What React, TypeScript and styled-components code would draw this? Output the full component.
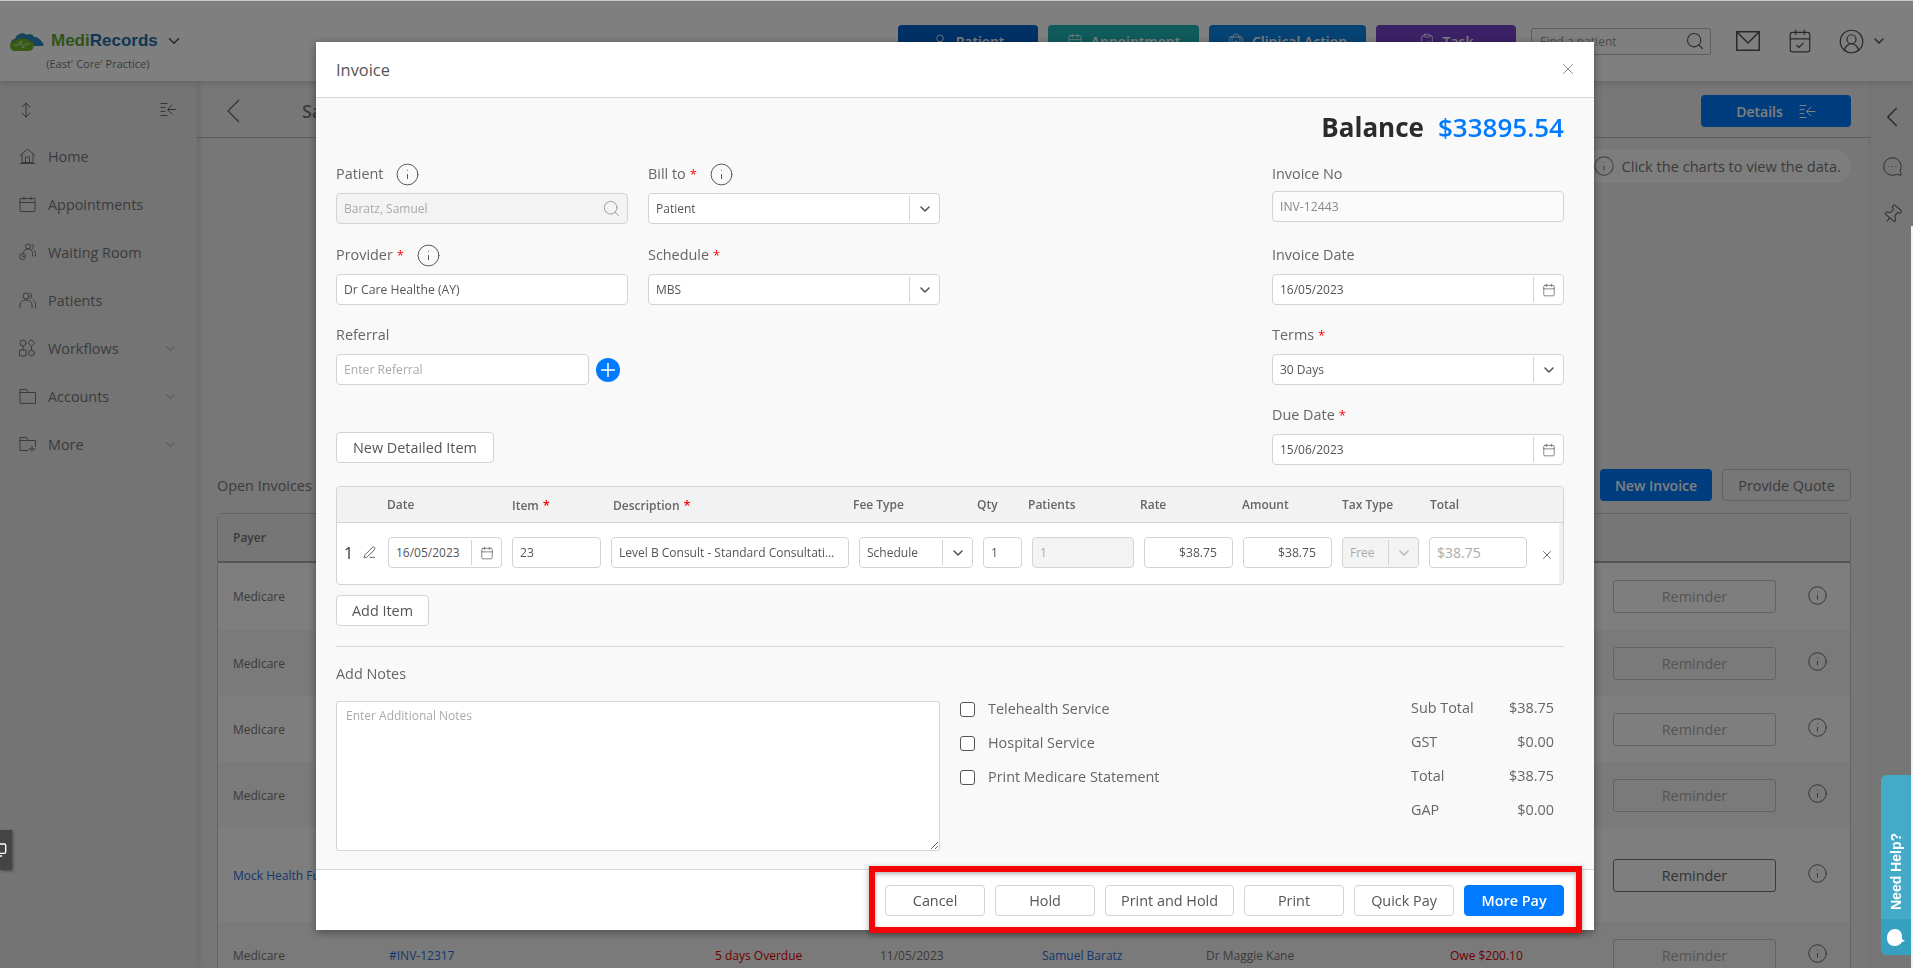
import React from 'react';
import styled, { createGlobalStyle } from 'styled-components';
import {
  Calendar,
  CalendarCheck,
  ChevronDown,
  ChevronLeft,
  CircleUserRound,
  ClipboardCheck,
  BriefcaseMedical,
  Info,
  MessageCircleMore,
  Monitor,
  PenLine,
  Pin,
  Search,
  UserRound,
  X
} from 'lucide-react';

const GlobalStyle = createGlobalStyle`
  html, body {
    margin: 0;
    height: 100%;
    overflow: hidden;
    font-family: 'Open Sans', 'Noto Sans', sans-serif;
    color: #666;
  }
  * { box-sizing: border-box; }
`;

/* background page */

const Page = styled.div`
  width: 1913px;
  height: 968px;
  display: flex;
  flex-direction: column;
  overflow: hidden;
  background: #eee;
`;

const TopBar = styled.header`
  height: 81px;
  flex: none;
  display: flex;
  align-items: center;
  padding: 1px 26px 0 8px;
  background: #fff;
  box-shadow: 0 2px 6px rgba(0, 0, 0, 0.15);
  position: relative;
  z-index: 2;
`;

const LogoBlock = styled.div`
  align-self: flex-start;
  margin-top: 29px;
  display: flex;
  flex-direction: column;
  align-items: center;
  margin-right: auto;
`;

const LogoRow = styled.div`
  height: 22px;
  display: flex;
  align-items: center;
  gap: 7px;
`;

const LogoText = styled.span`
  font-family: 'Liberation Sans', Arial, sans-serif;
  font-size: 17px;
  font-weight: 700;
  color: #1b6ea8;
  b {
    color: #62a82c;
    font-weight: 700;
  }
`;

const LogoSub = styled.div`
  margin: 5px 0 0 5px;
  font-size: 11px;
  line-height: 14px;
  color: #777;
`;

const ActionButton = styled.div<{ $bg: string; $w: number }>`
  width: ${p => p.$w}px;
  height: 32px;
  margin-right: 10px;
  border-radius: 4px;
  background: ${p => p.$bg};
  color: #fff;
  font-size: 14px;
  font-weight: 600;
  display: flex;
  align-items: center;
  justify-content: center;
  gap: 8px;
`;

const FindBox = styled.div`
  width: 180px;
  height: 27px;
  margin-left: 5px;
  padding: 0 5px 0 8px;
  display: flex;
  align-items: center;
  justify-content: space-between;
  border: 1px solid #bbb;
  border-radius: 2px;
  font-size: 12px;
  color: #999;
`;

const TopIcon = styled.span<{ $left: number }>`
  margin-left: ${p => p.$left}px;
  display: flex;
  color: #555;
`;

const Body = styled.div`
  flex: 1;
  display: flex;
  min-height: 0;
`;

const Sidebar = styled.nav`
  width: 197px;
  flex: none;
  background: #e9e9e9;
  box-shadow: 2px 0 6px rgba(0, 0, 0, 0.12);
  position: relative;
  z-index: 1;
`;

const SideTools = styled.div`
  height: 51px;
  padding: 6px 20px 0 21px;
  display: flex;
  align-items: center;
  justify-content: space-between;
  color: #666;
`;

const NavItem = styled.div`
  height: 48px;
  padding: 0 19px;
  display: flex;
  align-items: center;
  gap: 12px;
  font-size: 14.4px;
  font-weight: 500;
  color: #777;
`;

const NavLabel = styled.span`
  flex: 1;
`;

const Main = styled.main`
  flex: 1;
  min-width: 0;
  background: #eee;
`;

const MainHeader = styled.div`
  height: 57px;
  padding: 4px 20px 0 29px;
  display: flex;
  align-items: center;
  border-bottom: 1px solid #bdbdbd;
`;

const PageTitle = styled.h1`
  flex: 1;
  margin: 0 0 0 62px;
  font-size: 18px;
  font-weight: 600;
  color: #777;
`;

const DetailsButton = styled.div`
  width: 150px;
  height: 32px;
  border-radius: 4px;
  background: #007bff;
  color: #fff;
  font-size: 14px;
  font-weight: 600;
  display: flex;
  align-items: center;
  justify-content: center;
  gap: 16px;
`;

const Content = styled.div`
  padding: 11px 20px 0;
`;

const TipRow = styled.div`
  display: flex;
  justify-content: flex-end;
  margin-bottom: 286px;
`;

const TipPill = styled.div`
  height: 34px;
  padding: 0 10px 0 8px;
  border-radius: 17px;
  background: #fafafa;
  display: flex;
  align-items: center;
  gap: 7px;
  font-size: 14.6px;
  color: #777;
`;

const InvoiceBar = styled.div`
  height: 32px;
  display: flex;
  align-items: center;
  justify-content: flex-end;
  gap: 10px;
  margin-bottom: 12px;
  font-size: 14.4px;
`;

const InvoiceTitle = styled.span`
  margin-right: auto;
  color: #777;
`;

const NewInvoice = styled.div`
  width: 112px;
  height: 32px;
  border-radius: 4px;
  background: #007bff;
  color: #fff;
  font-size: 14px;
  font-weight: 600;
  display: flex;
  align-items: center;
  justify-content: center;
`;

const ProvideQuote = styled.div`
  width: 129px;
  height: 32px;
  border-radius: 4px;
  border: 1px solid #c4c4c4;
  color: #777;
  display: flex;
  align-items: center;
  justify-content: center;
`;

const InvoiceTable = styled.div`
  border: 1px solid #c8c8c8;
  border-radius: 4px;
`;

const gridColumns = '156px 326px 165px 162px 164px 244px 163px 163px 1fr';

const InvoiceHead = styled.div`
  height: 49px;
  padding-left: 15px;
  display: grid;
  grid-template-columns: ${gridColumns};
  align-items: center;
  border-bottom: 2px solid #aaa;
  background: #ececec;
  font-size: 12px;
  font-weight: 600;
  color: #777;
`;

const InvoiceRow = styled.div<{ $h: number; $odd: boolean }>`
  height: ${p => p.$h}px;
  padding-left: 15px;
  display: grid;
  grid-template-columns: ${gridColumns};
  align-items: center;
  background: ${p => (p.$odd ? '#fdfdfd' : '#f4f4f4')};
  font-size: 12px;
  color: #777;
`;

const Link = styled.span`
  color: #2a6fd6;
  white-space: nowrap;
`;

const Overdue = styled.span`
  color: #e00000;
  white-space: nowrap;
`;

const Reminder = styled.div<{ $active: boolean }>`
  height: 33px;
  border-radius: 3px;
  border: 1px solid ${p => (p.$active ? '#777' : '#c4c4c4')};
  color: ${p => (p.$active ? '#666' : '#aaa')};
  font-size: 14.4px;
  font-weight: 500;
  display: flex;
  align-items: center;
  justify-content: center;
`;

const RowInfo = styled.div`
  padding: 0 0 3px 31px;
  display: flex;
  color: #666;
`;

const Rail = styled.aside`
  width: 42px;
  flex: none;
  padding: 24px 0 0;
  display: flex;
  flex-direction: column;
  align-items: center;
  gap: 27px;
  background: #ececec;
  color: #555;
  box-shadow: -1px 0 3px rgba(0, 0, 0, 0.08);
`;

const RailChevron = styled(ChevronLeft)`
  margin: -5px 0;
`;

const RailChat = styled(MessageCircleMore)`
  transform: scaleX(-1);
`;

const RailPin = styled(Pin)`
  transform: rotate(40deg);
`;

/* fixed layers */

const Dim = styled.div`
  position: fixed;
  inset: 0;
  z-index: 10;
  background: rgba(0, 0, 0, 0.5);
`;

const TopEdge = styled.div`
  position: fixed;
  left: 0;
  top: 0;
  width: 100%;
  height: 1px;
  z-index: 30;
  background: #c9c9c9;
`;

const RightEdge = styled.div`
  position: fixed;
  right: 0;
  top: 226px;
  bottom: 0;
  width: 2px;
  z-index: 30;
  background: #efefef;
`;

const Float = styled.div`
  position: fixed;
  left: 0;
  top: 830px;
  width: 12px;
  height: 40px;
  z-index: 20;
  overflow: hidden;
  background: #444;
  box-shadow: 1px 1px 3px rgba(0, 0, 0, 0.4);
  display: flex;
  align-items: center;
  justify-content: flex-end;
  padding-right: 5px;
  color: #fff;
  svg {
    flex: none;
  }
`;

const HelpTab = styled.div`
  position: fixed;
  right: 2px;
  top: 775px;
  width: 30px;
  height: 180px;
  z-index: 20;
  border-radius: 6px 0 0 6px;
  overflow: hidden;
  background: #43aac8;
  display: flex;
  flex-direction: column;
`;

const HelpText = styled.div`
  flex: 1;
  display: flex;
  justify-content: center;
  align-items: flex-start;
  padding-top: 58px;
`;

const HelpLabel = styled.span`
  writing-mode: vertical-rl;
  transform: rotate(180deg);
  font-family: 'Liberation Sans', Arial, sans-serif;
  font-size: 14px;
  font-weight: 700;
  color: #fff;
`;

const HelpIcon = styled.div`
  height: 36px;
  background: #36a0bf;
  display: flex;
  align-items: center;
  justify-content: center;
`;

/* invoice modal */

const Modal = styled.section`
  position: fixed;
  left: 316px;
  top: 42px;
  width: 1278px;
  height: 888px;
  z-index: 15;
  display: flex;
  flex-direction: column;
  background: #f9f9f9;
  border-radius: 2px;
  box-shadow: 0 2px 8px rgba(0, 0, 0, 0.4);
`;

const ModalHeader = styled.div`
  height: 56px;
  flex: none;
  padding: 0 17px 1px 20px;
  display: flex;
  align-items: center;
  justify-content: space-between;
  background: #fff;
  border-bottom: 1px solid #d5d5d5;
  color: #666;
`;

const ModalTitle = styled.h2`
  margin: 0;
  font-size: 16.4px;
  font-weight: 500;
  color: #555;
`;

const ModalBody = styled.div`
  flex: 1;
  padding: 0 30px 0 20px;
`;

const BalanceRow = styled.div`
  height: 58px;
  margin-bottom: 8px;
  display: flex;
  align-items: center;
  justify-content: flex-end;
  gap: 14px;
  font-size: 26px;
  font-weight: 700;
  color: #2b2b2b;
`;

const BalanceValue = styled.span`
  color: #007bff;
  font-weight: 600;
`;

const FormTop = styled.div`
  display: flex;
  justify-content: space-between;
  margin-bottom: 1px;
`;

const FormLeft = styled.div`
  width: 604px;
`;

const FieldGrid = styled.div`
  display: grid;
  grid-template-columns: 292px 292px;
  column-gap: 20px;
`;

const Field = styled.div<{ $first?: boolean }>`
  margin-bottom: ${p => (p.$first ? 21 : 20)}px;
`;

const RightField = styled.div<{ $first?: boolean }>`
  margin-bottom: ${p => (p.$first ? 23 : 20)}px;
`;

const FormRight = styled.div`
  width: 292px;
`;

const Label = styled.div<{ $gap?: number }>`
  height: 20px;
  margin-bottom: ${p => p.$gap ?? 9}px;
  display: flex;
  align-items: center;
  font-size: 14.4px;
  font-weight: 500;
  line-height: 20px;
  color: #666;
`;

const Star = styled.span`
  margin-left: 4px;
  font-size: 13px;
  color: #f00;
`;

const LabelInfo = styled.span`
  margin-left: 12px;
  display: flex;
  color: #555;
`;

const Input = styled.input<{ $align?: string; $muted?: boolean; $large?: boolean; $ghost?: boolean }>`
  display: block;
  width: 100%;
  height: 31px;
  padding: 0 7px;
  border: 1px solid #d3d3d3;
  border-radius: 4px;
  outline: none;
  background: ${p => (p.$muted ? '#fbfbfb' : '#fff')};
  font-family: inherit;
  font-size: ${p => (p.$large ? 14 : 12.2)}px;
  color: ${p => (p.$muted ? '#888' : p.$ghost ? '#aaa' : '#555')};
  text-align: ${p => p.$align ?? 'left'};
  &::placeholder {
    color: #aaa;
    opacity: 1;
  }
  &:disabled {
    background: #f3f3f3;
    color: #aaa;
  }
`;

const RateInput = styled(Input)`
  padding-right: 15px;
`;

const SearchWrap = styled.div`
  height: 31px;
  padding: 0 6px 0 7px;
  display: flex;
  align-items: center;
  justify-content: space-between;
  border: 1px solid #d3d3d3;
  border-radius: 4px;
  background: #f3f3f3;
  font-size: 12px;
  color: #aaa;
`;

const ReferralRow = styled.div`
  display: flex;
  align-items: center;
  gap: 7px;
`;

const ReferralInput = styled(Input)`
  width: 253px;
`;

const AddCircle = styled.span`
  width: 24px;
  height: 24px;
  border-radius: 50%;
  background: #007bff;
  display: flex;
  align-items: center;
  justify-content: center;
`;

const ComboBox = styled.div<{ $disabled?: boolean }>`
  height: 31px;
  display: flex;
  align-items: center;
  border: 1px solid #d3d3d3;
  border-radius: 4px;
  background: ${p => (p.$disabled ? '#f3f3f3' : '#fff')};
  font-size: 12px;
  color: ${p => (p.$disabled ? '#aaa' : '#555')};
`;

const ComboText = styled.span`
  flex: 1;
  min-width: 0;
  padding: 0 7px;
`;

const ComboEnd = styled.span<{ $disabled?: boolean }>`
  width: 30px;
  height: 25px;
  flex: none;
  display: flex;
  align-items: center;
  justify-content: center;
  border-left: 1px solid #d3d3d3;
  color: ${p => (p.$disabled ? '#bbb' : '#555')};
`;

const Button = styled.button<{ $primary?: boolean }>`
  height: 31px;
  min-width: 77px;
  padding: 0 15px;
  border: 1px solid ${p => (p.$primary ? '#007bff' : '#d3d3d3')};
  border-radius: 4px;
  background: ${p => (p.$primary ? '#007bff' : '#fff')};
  color: ${p => (p.$primary ? '#fff' : '#555')};
  font-family: inherit;
  font-size: 14.4px;
  font-weight: ${p => (p.$primary ? 600 : 500)};
`;

const DetailButton = styled(Button)`
  margin-top: 27px;
  padding: 0 16px;
  display: block;
`;

const ItemsTable = styled.div`
  border: 1px solid #d3d3d3;
  border-radius: 4px;
  background: #fff;
`;

const itemColumns =
  '41px 114px 89px 238px 114px 39px 102px 89px 89px 77px 98px 1fr';

const ItemsHead = styled.div`
  height: 36px;
  display: grid;
  grid-template-columns: ${itemColumns};
  column-gap: 10px;
  align-items: center;
  background: #f2f2f2;
  border-bottom: 1px solid #d3d3d3;
  border-radius: 4px 4px 0 0;
  font-size: 12px;
  font-weight: 600;
  color: #666;
`;

const HeadCell = styled.span<{ $shift?: number }>`
  margin-left: ${p => p.$shift ?? 0}px;
  white-space: nowrap;
`;

const ItemsRow = styled.div`
  height: 61px;
  padding-top: 14px;
  display: grid;
  grid-template-columns: ${itemColumns};
  column-gap: 10px;
  align-items: start;
  border-right: 4px solid #f1f1f1;
  border-radius: 0 0 4px 4px;
`;

const LineLead = styled.div`
  height: 31px;
  padding-left: 7px;
  display: flex;
  align-items: center;
  gap: 10px;
  font-size: 16px;
  color: #333;
`;

const DescriptionBox = styled.div`
  height: 31px;
  padding: 0 5px 0 7px;
  line-height: 29px;
  border: 1px solid #d3d3d3;
  border-radius: 4px;
  font-size: 12px;
  color: #555;
  white-space: nowrap;
`;

const RemoveLine = styled.span`
  height: 31px;
  padding: 5px 0 0 3px;
  display: flex;
  align-items: center;
  color: #333;
`;

const AddItem = styled(Button)`
  margin-top: 10px;
  display: block;
`;

const Divider = styled.hr`
  margin: 20px 0 17px;
  border: 0;
  border-top: 1px solid #d8d8d8;
`;

const NotesRow = styled.div`
  margin-top: 17px;
  display: flex;
`;

const NotesArea = styled.textarea`
  width: 604px;
  height: 150px;
  flex: none;
  padding: 5px 9px;
  border: 1px solid #d3d3d3;
  border-radius: 3px;
  outline: none;
  resize: both;
  background: #fff;
  font-family: inherit;
  font-size: 12px;
  &::placeholder {
    color: #aaa;
    opacity: 1;
  }
`;

const Options = styled.div`
  margin: -3px 0 0 20px;
  width: 451px;
  display: flex;
  flex-direction: column;
  gap: 14px;
`;

const OptionRow = styled.label`
  height: 20px;
  display: flex;
  align-items: center;
  gap: 13px;
  font-size: 14.4px;
  font-weight: 500;
  color: #666;
`;

const CheckBox = styled.span`
  width: 15px;
  height: 15px;
  margin-top: 2px;
  border: 1px solid #555;
  border-radius: 3px;
  background: #fff;
`;

const Summary = styled.div`
  margin-top: -3px;
  width: 143px;
  display: grid;
  grid-template-columns: 1fr auto;
  grid-auto-rows: 20px;
  row-gap: 14px;
  font-size: 14.4px;
  font-weight: 500;
  line-height: 20px;
  color: #666;
`;

const SummaryValue = styled.span`
  justify-self: end;
`;

const ModalFooter = styled.div`
  height: 61px;
  flex: none;
  padding-right: 30px;
  display: flex;
  align-items: center;
  justify-content: flex-end;
  gap: 10px;
  background: #fff;
  border-top: 1px solid #d8d8d8;
`;

const FooterButton = styled(Button)`
  min-width: 100px;
`;

const RedBox = styled.div`
  position: fixed;
  left: 869px;
  top: 866px;
  width: 713px;
  height: 67px;
  z-index: 25;
  border: 6px solid #f40606;
  box-shadow: 0 2px 6px rgba(0, 0, 0, 0.35), inset 0 2px 4px rgba(0, 0, 0, 0.3);
`;

/* drawn icons */

const thin = {
  fill: 'none',
  stroke: 'currentColor',
  strokeWidth: 1,
  strokeLinecap: 'round' as const,
  strokeLinejoin: 'round' as const
};

const CloudLogo = () => (
  <svg width="36" height="20" viewBox="0 0 36 20">
    <path
      d="M3 14c-1-4 2-6 4-6 1-5 8-8 12-4 2-2 6-1 7 2 4 0 6 2 8 5 2 2 2 3 1 4H5c-1 0-2 0-2-1z"
      fill="#2a8ab8"
    />
    <path
      d="M2 15c0-3 3-6 7-6 3-2 9-2 12 1 3 0 5 2 5 4 0 3-2 6-5 6H8c-4 0-6-2-6-5z"
      fill="#6fb52f"
    />
    <path d="M6 14h5l2-4 2 7 2-4h5" fill="none" stroke="#dff0d0" strokeWidth="0.8" />
  </svg>
);

const UpDownIcon = () => (
  <svg width="10" height="16" viewBox="0 0 10 16" {...thin}>
    <path d="M5 1v14M1 5l4-4 4 4M1 11l4 4 4-4" />
  </svg>
);

const CollapseIcon = () => (
  <svg width="17" height="15" viewBox="0 0 17 15" {...thin}>
    <path d="M1 1.500h6M1 5.500h4M1 9.500h4M1 13.500h6M16 7.500H8M12 3l-4.500 4.500L12 12" />
  </svg>
);

const HomeIcon = () => (
  <svg width="17" height="16" viewBox="0 0 17 16" {...thin}>
    <path d="M1 7.500 8.500 1 16 7.500M3 6v8.500h11V6M6.500 14.500V9h4v5.500M1 15.500h15" />
  </svg>
);

const AppointmentIcon = () => (
  <svg width="17" height="16" viewBox="0 0 17 16" {...thin}>
    <rect x="1" y="2.500" width="15" height="13" rx="1" />
    <path d="M1 6.500h15M5 1v3M12 1v3" />
  </svg>
);

const WaitingIcon = () => (
  <svg width="17" height="18" viewBox="0 0 17 18" {...thin}>
    <circle cx="9" cy="3.500" r="2.500" />
    <path d="M13 1.200a2.500 2.500 0 0 1 0 4.600M4.500 10c0-2.500 2-4 4.500-4s4.500 1.500 4.500 4.500v2.500M15 7c1 .7 1.500 2 1.500 3.500V13" />
    <circle cx="3.500" cy="13.500" r="3" />
    <path d="M3.500 12v1.500h1.300" />
  </svg>
);

const PatientsIcon = () => (
  <svg width="17" height="17" viewBox="0 0 17 17" {...thin}>
    <circle cx="7" cy="4" r="3" />
    <path d="M11 1.300a3 3 0 0 1 0 5.400M1 16v-3c0-3 2.500-5 6-5s6 2 6 5v3M14 8c1.500.7 2.500 2.500 2.500 4.500V16" />
  </svg>
);

const WorkflowIcon = () => (
  <svg width="17" height="18" viewBox="0 0 17 18" {...thin}>
    <circle cx="4" cy="4" r="3" />
    <path d="m12.500 1 3.200 3.200-3.200 3.200-3.200-3.200z" />
    <rect x="1" y="11" width="6" height="6" />
    <circle cx="12.500" cy="14" r="3" />
    <path d="M4 7v4M12.500 7.500V11" />
  </svg>
);

const FolderIcon = () => (
  <svg width="17" height="16" viewBox="0 0 17 16" {...thin}>
    <path d="M1 15V1.500h6.500l1.500 3h7.500V15zM1 4.500h8" />
  </svg>
);

const FolderPlusIcon = () => (
  <svg width="17" height="16" viewBox="0 0 17 16" {...thin}>
    <path d="M9 14.500H1V1.500h6.500l1.500 3h7.500v6M1 4.500h8M13 10v5.500M10 13h6" />
  </svg>
);

const MailIcon = () => (
  <svg width="24" height="20" viewBox="0 0 24 20" fill="none" stroke="currentColor" strokeWidth="1.500">
    <rect x="0.750" y="0.750" width="22.500" height="18.500" />
    <path d="m1 1 11 11L23 1" />
  </svg>
);

const ChatBlob = () => (
  <svg width="18" height="17" viewBox="0 0 18 17">
    <path d="M8 0c4 0 7 3 7 7v3l3 2-3 1c-1 2-4 4-7 4-5 0-8-3-8-8s3-9 8-9z" fill="#fff" />
  </svg>
);

const BackChevron = () => (
  <svg width="14" height="24" viewBox="0 0 14 24" fill="none" stroke="currentColor" strokeWidth="1.200">
    <path d="M13 1 2 12l11 11" />
  </svg>
);

/* data */

const navItems = [
  { label: 'Home', icon: <HomeIcon /> },
  { label: 'Appointments', icon: <AppointmentIcon /> },
  { label: 'Waiting Room', icon: <WaitingIcon /> },
  { label: 'Patients', icon: <PatientsIcon /> },
  { label: 'Workflows', icon: <WorkflowIcon />, more: true },
  { label: 'Accounts', icon: <FolderIcon />, more: true },
  { label: 'More', icon: <FolderPlusIcon />, more: true }
];

const actions = [
  { label: 'Patient', bg: '#0062cc', w: 140, icon: <UserRound size={16} strokeWidth={1.2} /> },
  { label: 'Appointment', bg: '#1fb6b9', w: 151, icon: <Calendar size={16} strokeWidth={1.2} /> },
  { label: 'Clinical Action', bg: '#0b87e8', w: 157, icon: <BriefcaseMedical size={16} strokeWidth={1.2} /> },
  { label: 'Task', bg: '#7644cc', w: 140, icon: <ClipboardCheck size={16} strokeWidth={1.2} /> }
];

// only the last row shows past the modal, the others keep just their outer cells
const invoices = [
  { id: 1, payer: 'Medicare', h: 67 },
  { id: 2, payer: 'Medicare', h: 66 },
  { id: 3, payer: 'Medicare', h: 66 },
  { id: 4, payer: 'Medicare', h: 66 },
  { id: 5, payer: 'Mock Health Fund', h: 94, link: true },
  { id: 6, payer: 'Medicare', h: 66, no: '#INV-12317', status: '5 days Overdue', date: '11/05/2023', patient: 'Samuel Baratz', doctor: 'Dr Maggie Kane', owe: 'Owe $200.10' }
];

const options = ['Telehealth Service', 'Hospital Service', 'Print Medicare Statement'];

const totals = [
  ['Sub Total', '$38.75'],
  ['GST', '$0.00'],
  ['Total', '$38.75'],
  ['GAP', '$0.00']
];

const footerButtons = ['Cancel', 'Hold', 'Print and Hold', 'Print', 'Quick Pay'];

const InfoMark = () => <Info size={25} strokeWidth={0.95} />;
const DownMark = () => <ChevronDown size={16} strokeWidth={2.4} />;

const Combo: React.FC<{ value: string; date?: boolean; disabled?: boolean }> = ({ value, date, disabled }) => (
  <ComboBox $disabled={disabled}>
    <ComboText>{value}</ComboText>
    <ComboEnd $disabled={disabled}>
      {date ? <Calendar size={14} strokeWidth={1.2} /> : <DownMark />}
    </ComboEnd>
  </ComboBox>
);

const App: React.FC = () => (
  <>
    <GlobalStyle />
    <Page>
      <TopBar>
        <LogoBlock>
          <LogoRow>
            <CloudLogo />
            <LogoText><b>Medi</b>Records</LogoText>
            <ChevronDown size={18} strokeWidth={2.2} color="#555" />
          </LogoRow>
          <LogoSub>(East' Core' Practice)</LogoSub>
        </LogoBlock>
        {actions.map(a => (
          <ActionButton key={a.label} $bg={a.bg} $w={a.w}>
            {a.icon}
            {a.label}
          </ActionButton>
        ))}
        <FindBox>
          Find a patient
          <Search size={20} strokeWidth={1.3} color="#555" />
        </FindBox>
        <TopIcon $left={25}><MailIcon /></TopIcon>
        <TopIcon $left={27}><CalendarCheck size={26} strokeWidth={1.1} /></TopIcon>
        <TopIcon $left={25}><CircleUserRound size={27} strokeWidth={1.1} /></TopIcon>
        <TopIcon $left={6}><ChevronDown size={16} strokeWidth={2.2} /></TopIcon>
      </TopBar>
      <Body>
        <Sidebar>
          <SideTools>
            <UpDownIcon />
            <CollapseIcon />
          </SideTools>
          {navItems.map(item => (
            <NavItem key={item.label}>
              {item.icon}
              <NavLabel>{item.label}</NavLabel>
              {item.more && <ChevronDown size={15} strokeWidth={1} />}
            </NavItem>
          ))}
        </Sidebar>
        <Main>
          <MainHeader>
            <BackChevron />
            <PageTitle>Samuel Baratz</PageTitle>
            <DetailsButton>Details <CollapseIcon /></DetailsButton>
          </MainHeader>
          <Content>
            <TipRow>
              <TipPill>
                <Info size={22} strokeWidth={1.1} />
                Click the charts to view the data.
              </TipPill>
            </TipRow>
            <InvoiceBar>
              <InvoiceTitle>Open Invoices</InvoiceTitle>
              <NewInvoice>New Invoice</NewInvoice>
              <ProvideQuote>Provide Quote</ProvideQuote>
            </InvoiceBar>
            <InvoiceTable>
              <InvoiceHead><span>Payer</span></InvoiceHead>
              {invoices.map((row, i) => (
                <InvoiceRow key={row.id} $h={row.h} $odd={i % 2 === 0}>
                  {row.link ? <Link>{row.payer}</Link> : <span>{row.payer}</span>}
                  <Link>{row.no}</Link>
                  <Overdue>{row.status}</Overdue>
                  <span>{row.date}</span>
                  <Link>{row.patient}</Link>
                  <span>{row.doctor}</span>
                  <Overdue>{row.owe}</Overdue>
                  <Reminder $active={Boolean(row.link)}>Reminder</Reminder>
                  <RowInfo><Info size={21} strokeWidth={1.1} /></RowInfo>
                </InvoiceRow>
              ))}
            </InvoiceTable>
          </Content>
        </Main>
        <Rail>
          <RailChevron size={34} strokeWidth={1} />
          <RailChat size={21} strokeWidth={1.1} />
          <RailPin size={21} strokeWidth={1.1} />
        </Rail>
      </Body>
    </Page>

    <Dim />
    <TopEdge />
    <RightEdge />
    <Float><Monitor size={16} strokeWidth={2} /></Float>
    <HelpTab>
      <HelpText><HelpLabel>Need Help?</HelpLabel></HelpText>
      <HelpIcon><ChatBlob /></HelpIcon>
    </HelpTab>

    <Modal>
      <ModalHeader>
        <ModalTitle>Invoice</ModalTitle>
        <X size={18} strokeWidth={1} />
      </ModalHeader>
      <ModalBody>
        <BalanceRow>
          <span>Balance</span>
          <BalanceValue>$33895.54</BalanceValue>
        </BalanceRow>
        <FormTop>
          <FormLeft>
            <FieldGrid>
              <Field $first>
                <Label>Patient<LabelInfo><InfoMark /></LabelInfo></Label>
                <SearchWrap>
                  Baratz, Samuel
                  <Search size={19} strokeWidth={1} color="#888" />
                </SearchWrap>
              </Field>
              <Field $first>
                <Label>Bill to<Star>*</Star><LabelInfo><InfoMark /></LabelInfo></Label>
                <Combo value="Patient" />
              </Field>
              <Field>
                <Label>Provider<Star>*</Star><LabelInfo><InfoMark /></LabelInfo></Label>
                <Input readOnly value="Dr Care Healthe (AY)" />
              </Field>
              <Field>
                <Label>Schedule<Star>*</Star></Label>
                <Combo value="MBS" />
              </Field>
              <Field>
                <Label>Referral</Label>
                <ReferralRow>
                  <ReferralInput readOnly placeholder="Enter Referral" />
                  <AddCircle>
                    <svg width="16" height="16" viewBox="0 0 16 16" stroke="#fff" strokeWidth="1.500">
                      <path d="M8 1v14M1 8h14" />
                    </svg>
                  </AddCircle>
                </ReferralRow>
              </Field>
            </FieldGrid>
            <DetailButton>New Detailed Item</DetailButton>
          </FormLeft>
          <FormRight>
            <RightField $first>
              <Label $gap={7}>Invoice No</Label>
              <Input readOnly $muted value="INV-12443" />
            </RightField>
            <RightField>
              <Label>Invoice Date</Label>
              <Combo value="16/05/2023" date />
            </RightField>
            <RightField>
              <Label>Terms<Star>*</Star></Label>
              <Combo value="30 Days" />
            </RightField>
            <RightField>
              <Label>Due Date<Star>*</Star></Label>
              <Combo value="15/06/2023" date />
            </RightField>
          </FormRight>
        </FormTop>

        <ItemsTable>
          <ItemsHead>
            <span />
            <HeadCell $shift={-1}>Date</HeadCell>
            <HeadCell>Item<Star>*</Star></HeadCell>
            <HeadCell $shift={2}>Description<Star>*</Star></HeadCell>
            <HeadCell $shift={-6}>Fee Type</HeadCell>
            <HeadCell $shift={-6}>Qty</HeadCell>
            <HeadCell $shift={-4}>Patients</HeadCell>
            <HeadCell $shift={-4}>Rate</HeadCell>
            <HeadCell $shift={-1}>Amount</HeadCell>
            <HeadCell>Tax Type</HeadCell>
            <HeadCell $shift={1}>Total</HeadCell>
            <span />
          </ItemsHead>
          <ItemsRow>
            <LineLead>1<PenLine size={13} strokeWidth={1.4} /></LineLead>
            <Combo value="16/05/2023" date />
            <Input readOnly value="23" />
            <DescriptionBox>Level B Consult - Standard Consultati…</DescriptionBox>
            <Combo value="Schedule" />
            <Input readOnly value="1" />
            <Input disabled value="1" />
            <RateInput readOnly $align="right" value="$38.75" />
            <RateInput readOnly $align="right" value="$38.75" />
            <Combo value="Free" disabled />
            <Input readOnly $large $ghost value="$38.75" />
            <RemoveLine><X size={14} strokeWidth={1.2} /></RemoveLine>
          </ItemsRow>
        </ItemsTable>
        <AddItem>Add Item</AddItem>
        <Divider />
        <Label $gap={0}>Add Notes</Label>
        <NotesRow>
          <NotesArea readOnly placeholder="Enter Additional Notes" />
          <Options>
            {options.map(o => (
              <OptionRow key={o}><CheckBox />{o}</OptionRow>
            ))}
          </Options>
          <Summary>
            {totals.map(([name, value]) => (
              <React.Fragment key={name}>
                <span>{name}</span>
                <SummaryValue>{value}</SummaryValue>
              </React.Fragment>
            ))}
          </Summary>
        </NotesRow>
      </ModalBody>
      <ModalFooter>
        {footerButtons.map(b => (
          <FooterButton key={b}>{b}</FooterButton>
        ))}
        <FooterButton $primary>More Pay</FooterButton>
      </ModalFooter>
    </Modal>
    <RedBox />
  </>
);

export default App;
